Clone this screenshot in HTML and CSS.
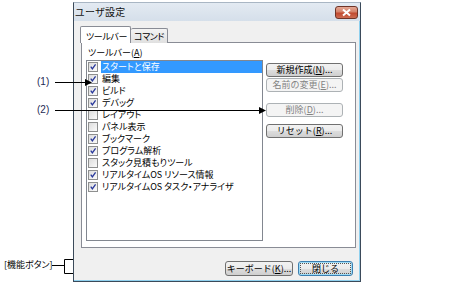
FILE: index.html
```html
<!DOCTYPE html>
<html lang="ja">
<head>
    <meta charset="UTF-8">
    <title>ユーザ設定</title>
    <link rel="stylesheet" href="styles.css">
</head>
<body>
    <svg class="defs" width="0" height="0">
        <symbol id="tick" viewBox="0 0 10 10">
            <path d="M2.2 4.6 L4.2 7.4 L8.2 1.8" fill="none" stroke="#26369a" stroke-width="1.6"/>
        </symbol>
    </svg>

    <div class="page">
        <div class="window">
            <div class="titlebar">
                <span class="title">ユーザ設定</span>
                <span class="close-btn">
                    <svg width="11" height="9" viewBox="0 0 11 9">
                        <path d="M2 1.5 L9 7.5 M9 1.5 L2 7.5" stroke="#fff" stroke-width="2"/>
                    </svg>
                </span>
            </div>

            <div class="client">
                <div class="tabs">
                    <div class="tab active">ツールバー</div>
                    <div class="tab">コマンド</div>
                </div>

                <div class="panel">
                    <div class="list-col">
                        <div class="field-label">ツールバー(<u>A</u>)</div>
                        <div class="listbox">
                            <div class="item selected"><span class="check"><svg><use href="#tick"/></svg></span><span class="text">スタートと保存</span></div>
                            <div class="item"><span class="check"><svg><use href="#tick"/></svg></span><span class="text">編集</span></div>
                            <div class="item"><span class="check"><svg><use href="#tick"/></svg></span><span class="text">ビルド</span></div>
                            <div class="item"><span class="check"><svg><use href="#tick"/></svg></span><span class="text">デバッグ</span></div>
                            <div class="item"><span class="check"></span><span class="text">レイアウト</span></div>
                            <div class="item"><span class="check"></span><span class="text">パネル表示</span></div>
                            <div class="item"><span class="check"><svg><use href="#tick"/></svg></span><span class="text">ブックマーク</span></div>
                            <div class="item"><span class="check"><svg><use href="#tick"/></svg></span><span class="text">プログラム解析</span></div>
                            <div class="item"><span class="check"></span><span class="text">スタック見積もりツール</span></div>
                            <div class="item"><span class="check"><svg><use href="#tick"/></svg></span><span class="text">リアルタイムOS リソース情報</span></div>
                            <div class="item"><span class="check"><svg><use href="#tick"/></svg></span><span class="text">リアルタイムOS タスク・アナライザ</span></div>
                        </div>
                    </div>

                    <div class="actions">
                        <button class="btn btn-new">新規作成(<u>N</u>)...</button>
                        <button class="btn btn-rename" disabled>名前の変更(<u>E</u>)...</button>
                        <button class="btn btn-delete" disabled>削除(<u>D</u>)...</button>
                        <button class="btn btn-reset">リセット(<u>R</u>)...</button>
                    </div>
                </div>

                <div class="footer">
                    <button class="btn btn-keyboard">キーボード(<u>K</u>)...</button>
                    <button class="btn btn-close default"><span class="focus">閉じる</span></button>
                </div>
            </div>
        </div>

        <!-- 説明用の引き出し線 -->
        <div class="callouts">
            <span class="callout-label label-1">(1)</span>
            <span class="callout-label label-2">(2)</span>
            <span class="callout-label label-func">[機能ボタン]</span>
            <svg class="callout-lines" width="474" height="285" viewBox="0 0 474 285">
                <path d="M55 82.5 H86" stroke="#000" stroke-width="1"/>
                <polygon points="85,79 92,82.5 85,86" fill="#000"/>
                <path d="M55 110.5 H260" stroke="#000" stroke-width="1"/>
                <polygon points="259,107 266,110.5 259,114" fill="#000"/>
                <path d="M52 265.5 H64.5 M73 259.5 H64.5 V273.5 H73" fill="none" stroke="#000" stroke-width="1"/>
            </svg>
        </div>
    </div>
</body>
</html>
```

FILE: styles.css
```css
body {
    margin: 0;
    background: #fff;
    font-family: "Noto Sans CJK JP", "Noto Sans", sans-serif;
    font-feature-settings: "palt";
    color: #000;
}

.defs {
    position: absolute;
}

.page {
    position: relative;
    width: 474px;
    height: 285px;
    padding-top: 2px;
    box-sizing: border-box;
}

.window {
    margin-left: 73px;
    width: 288px;
    height: 280px;
    box-sizing: border-box;
    border: 1px solid #3b4a5a;
    border-top-color: #a9b6c4;
    background: #f0f0f0;
    box-shadow: inset -1px -1px 0 #8fd0ee;
    display: flex;
    flex-direction: column;
}

.titlebar {
    height: 18px;
    display: flex;
    align-items: center;
    justify-content: space-between;
    padding: 0 2px 0 1px;
    background: linear-gradient(to bottom, #e3eaf2, #d5dfea);
}

.title {
    font-size: 10px;
    line-height: 12px;
    color: #111;
    letter-spacing: 0.3px;
}

.close-btn {
    width: 23px;
    height: 13px;
    box-sizing: border-box;
    border: 1px solid #6e3427;
    border-radius: 3px;
    background: linear-gradient(to bottom, #e6a894, #d48169 45%, #c1492f 55%, #cd6c52);
    display: flex;
    align-items: center;
    justify-content: center;
}

.close-btn svg {
    display: block;
}

.client {
    flex: 1;
    padding: 5px 4px 0 7px;
    display: flex;
    flex-direction: column;
}

.tabs {
    display: flex;
    align-items: flex-end;
    height: 17px;
    margin-bottom: -1px;
    position: relative;
    z-index: 1;
}

.tab {
    font-size: 9px;
    line-height: 13px;
    height: 15px;
    box-sizing: border-box;
    padding: 1px 0 0 3px;
    width: 37px;
    white-space: nowrap;
    letter-spacing: -0.4px;
    border: 1px solid #898c95;
    border-left: none;
    border-bottom: none;
    border-radius: 2px 2px 0 0;
    background: linear-gradient(to bottom, #f4f4f4, #e0e0e0);
}

.tab.active {
    height: 17px;
    width: 51px;
    margin-left: -1px;
    padding: 3px 0 0 5px;
    border-left: 1px solid #898c95;
    background: #fff;
}

.panel {
    height: 206px;
    box-sizing: border-box;
    border: 1px solid #898c95;
    background: #fff;
    padding: 4px 0 0 4px;
    display: flex;
}

.field-label {
    font-size: 9px;
    line-height: 12px;
    height: 12px;
    padding-left: 2px;
    margin-bottom: 1px;
}

.listbox {
    width: 177px;
    height: 181px;
    box-sizing: border-box;
    border: 1px solid #828790;
}

.item {
    height: 12px;
    display: flex;
    align-items: center;
    font-size: 9px;
    line-height: 12px;
    white-space: nowrap;
}

.check {
    width: 10px;
    height: 10px;
    box-sizing: border-box;
    margin: 0 3px 0 1px;
    border: 1px solid #8e8f8f;
    background: linear-gradient(135deg, #dcdcdc, #fbfbfb);
    flex-shrink: 0;
}

.check svg {
    display: block;
    width: 8px;
    height: 8px;
}

.text {
    flex: 1;
    padding-left: 1px;
}

.item.selected .text {
    background: #3399ff;
    color: #fff;
}

.actions {
    display: flex;
    flex-direction: column;
    margin-left: 3px;
    padding-top: 16px;
}

.btn {
    font-family: inherit;
    font-size: 9px;
    line-height: 12px;
    height: 14px;
    padding: 0;
    box-sizing: border-box;
    border: 1px solid #707070;
    border-radius: 3px;
    background: linear-gradient(to bottom, #f2f2f2, #ebebeb 50%, #dddddd 51%, #cfcfcf);
    color: #000;
}

.btn:disabled {
    border-color: #adb2b5;
    background: #f4f4f4;
    color: #838383;
}

.actions .btn {
    width: 77px;
}

.btn-rename {
    margin-top: 1px;
}

.btn-delete {
    margin-top: 11px;
}

.btn-reset {
    margin-top: 7px;
}

.footer {
    display: flex;
    justify-content: flex-end;
    gap: 5px;
    margin-top: 13px;
    padding-right: 3px;
}

.footer .btn {
    height: 15px;
}

.btn-keyboard {
    width: 68px;
}

.btn-close {
    width: 55px;
    padding: 1px;
    border-color: #3c7fb1;
    box-shadow: inset 0 0 0 1px #9fdcf6;
}

.btn-close .focus {
    display: block;
    height: 11px;
    line-height: 10px;
    border: 1px dotted #555;
    box-sizing: border-box;
}

.callouts {
    position: absolute;
    left: 0;
    top: 0;
    width: 474px;
    height: 285px;
    pointer-events: none;
}

.callout-lines {
    position: absolute;
    left: 0;
    top: 0;
}

.callout-label {
    position: absolute;
    font-family: "Liberation Sans", sans-serif;
    font-size: 10px;
    line-height: 12px;
    color: #1d2b55;
}

.label-1 {
    left: 37px;
    top: 76px;
}

.label-2 {
    left: 37px;
    top: 104px;
}

.label-func {
    left: 4px;
    top: 259px;
    font-family: "Noto Sans CJK JP", sans-serif;
    font-size: 9px;
    color: #000;
}
```
